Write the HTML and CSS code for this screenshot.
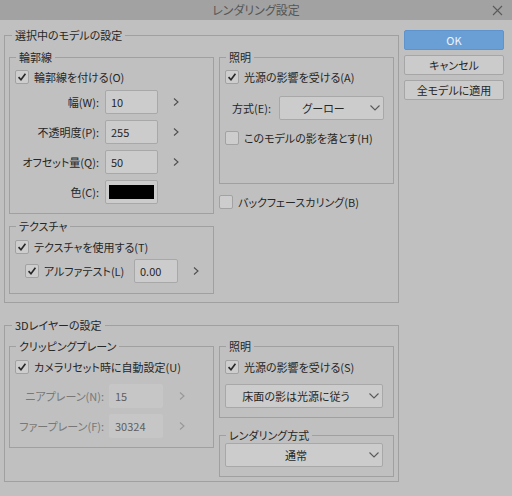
FILE: index.html
```html
<!DOCTYPE html>
<html lang="ja">
<head>
<meta charset="utf-8">
<link rel="stylesheet" href="styles.css">
</head>
<body>
<div class="titlebar">
  <span></span>
  <span class="title">レンダリング設定</span>
  <span class="close"><svg width="11" height="11" viewBox="0 0 11 11"><path d="M1 1L10 10M10 1L1 10" stroke="#5a5a5a" stroke-width="1.1" fill="none"/></svg></span>
</div>
<div class="window">
  <div class="col-main">
    <fieldset class="outer g1">
      <legend>選択中のモデルの設定</legend>
      <div class="cols">
        <div class="colL">
          <fieldset class="inner outline">
            <legend>輪郭線</legend>
            <div class="chk"><span class="box on"><svg viewBox="0 0 14 14"><path d="M3 7.2L5.8 10.2L11 3.2"/></svg></span><span>輪郭線を付ける(O)</span></div>
            <div class="field"><span class="lbl">幅(W):</span><span class="input">10</span><svg class="spin" viewBox="0 0 6 8"><path d="M1 0.5L5 4L1 7.5"/></svg></div>
            <div class="field"><span class="lbl">不透明度(P):</span><span class="input">255</span><svg class="spin" viewBox="0 0 6 8"><path d="M1 0.5L5 4L1 7.5"/></svg></div>
            <div class="field"><span class="lbl">オフセット量(Q):</span><span class="input">50</span><svg class="spin" viewBox="0 0 6 8"><path d="M1 0.5L5 4L1 7.5"/></svg></div>
            <div class="field"><span class="lbl">色(C):</span><span class="input color"><span class="swatch"></span></span></div>
          </fieldset>
          <fieldset class="inner texture">
            <legend>テクスチャ</legend>
            <div class="chk"><span class="box on"><svg viewBox="0 0 14 14"><path d="M3 7.2L5.8 10.2L11 3.2"/></svg></span><span>テクスチャを使用する(T)</span></div>
            <div class="field alpha"><div class="chk sub"><span class="box on"><svg viewBox="0 0 14 14"><path d="M3 7.2L5.8 10.2L11 3.2"/></svg></span><span>アルファテスト(L)</span></div><span class="input">0.00</span><svg class="spin" viewBox="0 0 6 8"><path d="M1 0.5L5 4L1 7.5"/></svg></div>
          </fieldset>
        </div>
        <div class="colR">
          <fieldset class="inner light1">
            <legend>照明</legend>
            <div class="chk"><span class="box on"><svg viewBox="0 0 14 14"><path d="M3 7.2L5.8 10.2L11 3.2"/></svg></span><span>光源の影響を受ける(A)</span></div>
            <div class="field method"><span class="mlbl">方式(E):</span><span class="select w105"><span class="val">グーロー</span><svg viewBox="0 0 10 6"><path d="M0.5 0.5L5 5L9.5 0.5"/></svg></span></div>
            <div class="chk shadow"><span class="box"></span><span>このモデルの影を落とす(H)</span></div>
          </fieldset>
          <div class="chk backface"><span class="box"></span><span>バックフェースカリング(B)</span></div>
        </div>
      </div>
    </fieldset>

    <fieldset class="outer g2">
      <legend>3Dレイヤーの設定</legend>
      <div class="cols">
        <div class="colL">
          <fieldset class="inner clip">
            <legend>クリッピングプレーン</legend>
            <div class="chk"><span class="box on"><svg viewBox="0 0 14 14"><path d="M3 7.2L5.8 10.2L11 3.2"/></svg></span><span>カメラリセット時に自動設定(U)</span></div>
            <div class="field dis near"><span class="lbl">ニアプレーン(N):</span><span class="input">15</span><svg class="spin" viewBox="0 0 6 8"><path d="M1 0.5L5 4L1 7.5"/></svg></div>
            <div class="field dis far"><span class="lbl">ファープレーン(F):</span><span class="input">30324</span><svg class="spin" viewBox="0 0 6 8"><path d="M1 0.5L5 4L1 7.5"/></svg></div>
          </fieldset>
        </div>
        <div class="colR">
          <fieldset class="inner light2">
            <legend>照明</legend>
            <div class="chk"><span class="box on"><svg viewBox="0 0 14 14"><path d="M3 7.2L5.8 10.2L11 3.2"/></svg></span><span>光源の影響を受ける(S)</span></div>
            <div class="select w158 floor"><span class="val">床面の影は光源に従う</span><svg viewBox="0 0 10 6"><path d="M0.5 0.5L5 5L9.5 0.5"/></svg></div>
          </fieldset>
          <fieldset class="inner render">
            <legend>レンダリング方式</legend>
            <div class="select w158"><span class="val">通常</span><svg viewBox="0 0 10 6"><path d="M0.5 0.5L5 5L9.5 0.5"/></svg></div>
          </fieldset>
        </div>
      </div>
    </fieldset>
  </div>
  <div class="buttons">
    <div class="btn primary">OK</div>
    <div class="btn">キャンセル</div>
    <div class="btn">全モデルに適用</div>
  </div>
</div>
</body>
</html>
```
FILE: styles.css
```css
html, body {
  margin: 0;
  padding: 0;
}
body {
  width: 512px;
  height: 496px;
  overflow: hidden;
  background: #c0c0c0;
  font-family: "Noto Sans CJK JP", "Noto Sans", sans-serif;
  font-size: 11px;
  line-height: 14px;
  font-feature-settings: "palt";
  color: #262626;
  white-space: nowrap;
}
.titlebar {
  height: 20px;
  background: #a2a2a2;
  display: grid;
  grid-template-columns: 1fr auto 1fr;
  align-items: center;
}
.title {
  color: #565656;
  font-size: 12px;
}
.close {
  justify-self: end;
  margin-right: 9px;
  display: flex;
}
.window {
  display: flex;
  gap: 5px;
  padding: 0 8px 0 4px;
}
.col-main {
  width: 395px;
  padding-top: 8px;
}
fieldset {
  margin: 0;
  min-width: 0;
  box-sizing: border-box;
  border: 1px solid #a0a0a0;
}
legend {
  padding: 0 3px;
  line-height: 14px;
}
.outer {
  width: 395px;
  padding: 8px 4px 8px 4px;
}
.outer > legend {
  margin-left: 3px;
}
.g2 {
  margin-top: 15px;
  padding-top: 7px;
  padding-bottom: 4px;
}
.cols {
  display: flex;
  gap: 5px;
  align-items: flex-start;
}
.colL {
  width: 205px;
  display: flex;
  flex-direction: column;
  gap: 5px;
}
.colR {
  width: 175px;
  display: flex;
  flex-direction: column;
}
.inner {
  width: 100%;
  padding: 6px 5px 9px 5px;
}
.inner > legend {
  margin-left: 1px;
}
.chk {
  display: flex;
  align-items: center;
  gap: 5px;
  height: 14px;
}
.box {
  flex: none;
  width: 14px;
  height: 14px;
  box-sizing: border-box;
  border: 1px solid #a2a2a2;
  border-radius: 2px;
  background: #cdcdcd;
  display: flex;
}
.box svg {
  width: 12px;
  height: 12px;
  fill: none;
  stroke: #262626;
  stroke-width: 1.9;
}
.field {
  display: flex;
  align-items: center;
  height: 24px;
  margin-top: 6px;
}
.lbl {
  flex: none;
  width: 84px;
  display: flex;
  justify-content: flex-end;
  margin-right: 6px;
}
.input {
  flex: none;
  width: 53px;
  height: 24px;
  box-sizing: border-box;
  border: 1px solid #a8a8a8;
  border-radius: 2px;
  background: #cccccc;
  padding-left: 5px;
  display: flex;
  align-items: center;
}
.input.color {
  padding: 4px 3px;
}
.swatch {
  flex: 1;
  align-self: stretch;
  background: #000;
}
.spin {
  flex: none;
  width: 6px;
  height: 8px;
  margin-left: 15px;
  fill: none;
  stroke: #4e4e4e;
  stroke-width: 1.1;
}
.texture {
  padding-top: 7px;
  padding-bottom: 10px;
}
.alpha {
  margin-top: 5px;
}
.chk.sub {
  flex: none;
  width: 109px;
  margin-left: 10px;
}
.alpha .input {
  width: 44px;
}
.light1 {
  padding-bottom: 38px;
}
.method {
  margin-top: 12px;
}
.mlbl {
  flex: none;
  width: 47px;
  margin-left: 7px;
}
.select {
  flex: none;
  height: 24px;
  box-sizing: border-box;
  border: 1px solid #a8a8a8;
  border-radius: 2px;
  background: #cccccc;
  display: flex;
  align-items: center;
}
.select .val {
  flex: 1;
  text-align: center;
}
.select svg {
  width: 10px;
  height: 6px;
  margin: 0 3px 0 3px;
  fill: none;
  stroke: #5a5a5a;
  stroke-width: 1.1;
}
.w105 {
  width: 105px;
}
.w158 {
  width: 158px;
}
.shadow {
  margin-top: 11px;
}
.backface {
  margin-top: 11px;
}
.clip {
  padding-top: 7px;
}
.near {
  margin-top: 10px;
}
.dis .lbl {
  width: 89px;
  margin-right: 5px;
  color: #787878;
}
.dis .input {
  width: 54px;
  border-color: #c6c6c6;
  background: #c6c6c6;
  color: #5e5e5e;
}
.dis .spin {
  margin-left: 16px;
  stroke: #979797;
}
.light2 {
  padding-top: 7px;
}
.floor {
  margin-top: 10px;
}
.render {
  margin-top: 10px;
  padding-top: 1px;
}
.buttons {
  width: 100px;
  padding-top: 10px;
  display: flex;
  flex-direction: column;
  gap: 5px;
}
.btn {
  height: 20px;
  box-sizing: border-box;
  border: 1px solid #a6a6a6;
  border-radius: 2px;
  background: #cbcbcb;
  display: flex;
  align-items: center;
  justify-content: center;
}
.btn.primary {
  background: #6a9fd6;
  border-color: #5f93cb;
  color: #eef4fb;
}
```
